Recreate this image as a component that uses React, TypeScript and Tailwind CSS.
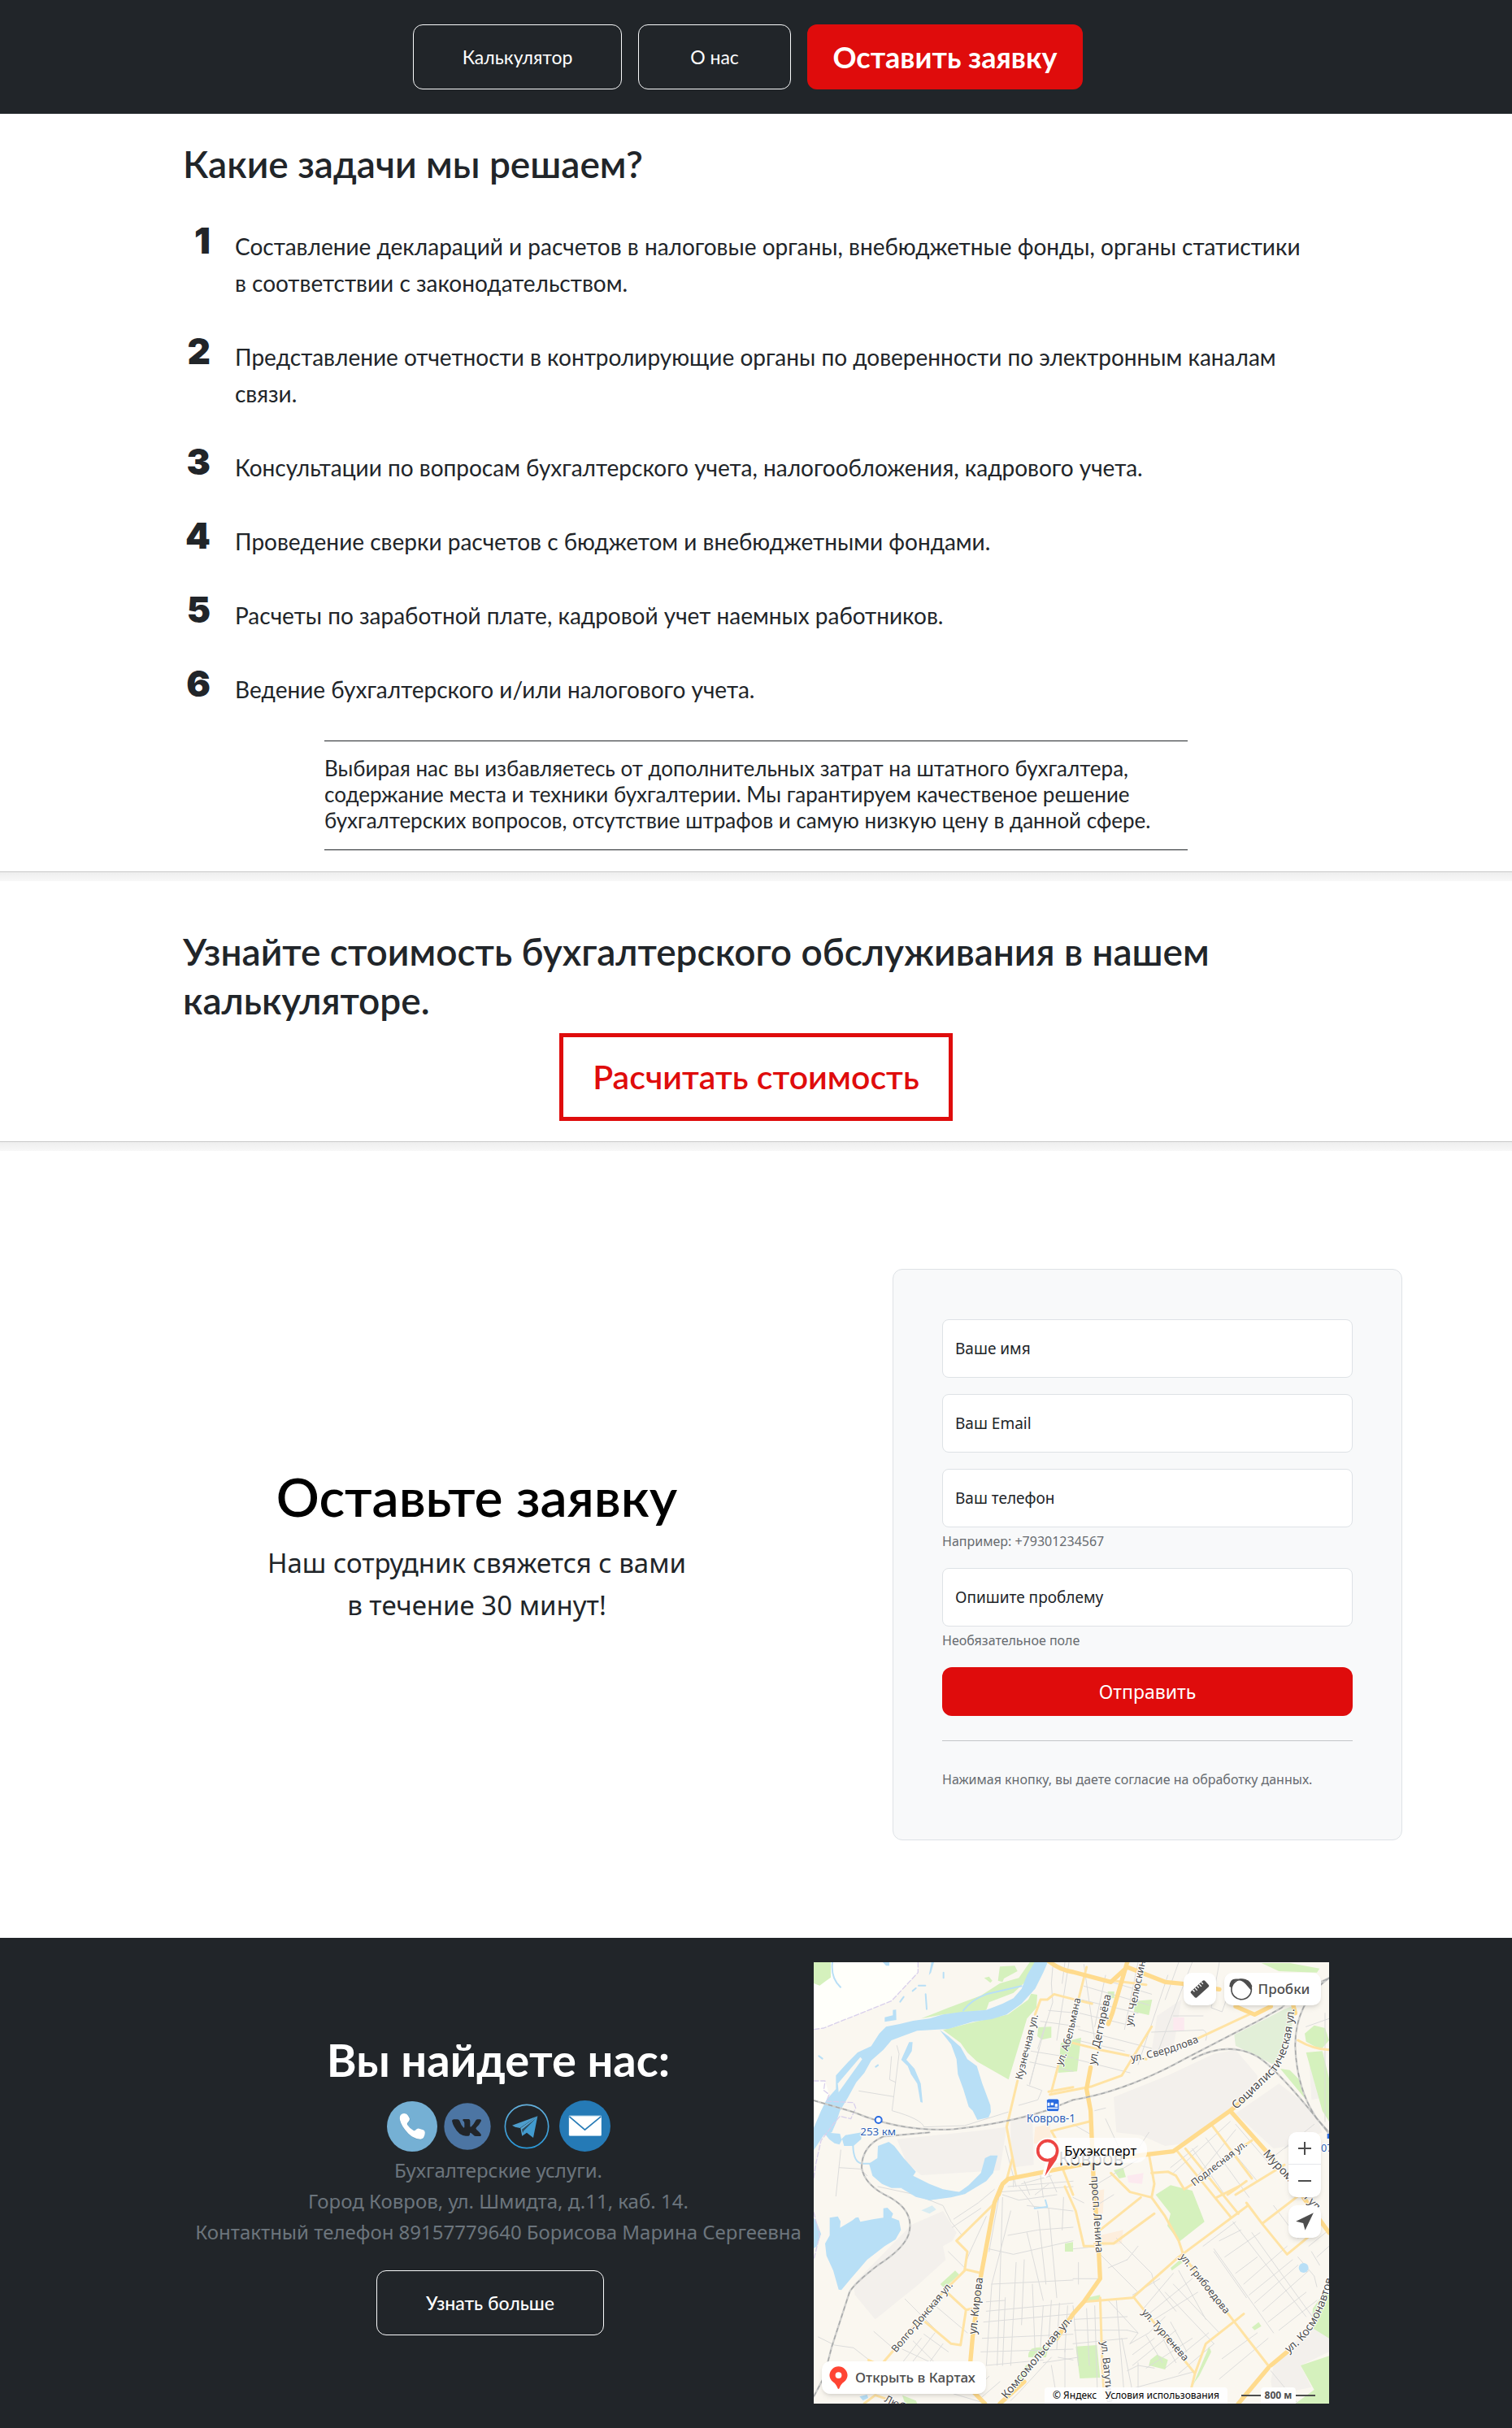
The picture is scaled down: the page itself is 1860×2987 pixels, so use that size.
import React from "react";

const TASKS = [
  "Составление деклараций и расчетов в налоговые органы, внебюджетные фонды, органы статистики в соответствии с законодательством.",
  "Представление отчетности в контролирующие органы по доверенности по электронным каналам связи.",
  "Консультации по вопросам бухгалтерского учета, налогообложения, кадрового учета.",
  "Проведение сверки расчетов с бюджетом и внебюджетными фондами.",
  "Расчеты по заработной плате, кадровой учет наемных работников.",
  "Ведение бухгалтерского и/или налогового учета.",
];

const OUTLINE_BUTTON =
  "flex h-20 items-center justify-center rounded-xl border border-gray-50 font-[Lato,sans-serif] text-[23px] text-white";

function Divider() {
  return <div className="h-3 border-t border-[#c8c8c8] bg-linear-to-b from-[#eeeeee] to-[#f8f8f8]" />;
}

function Field({ id, label, type = "text", hint }: { id: string; label: string; type?: string; hint?: string }) {
  return (
    <div className="mb-5">
      <div className="grid">
        <input
          id={id}
          type={type}
          className="col-start-1 row-start-1 h-[72px] w-full rounded-lg border border-[#dee2e6] bg-white px-4 text-[19px] text-[#212529]"
        />
        <label htmlFor={id} className="pointer-events-none col-start-1 row-start-1 self-center px-4 text-[19px] text-[#212529]">
          {label}
        </label>
      </div>
      {hint && <p className="pt-1 text-base leading-[26px] text-[#676b70]">{hint}</p>}
    </div>
  );
}

function PhoneIcon() {
  return (
    <svg viewBox="30 30 186 186" className="size-[62px]" aria-hidden="true">
      <circle cx="123" cy="123" r="93" fill="#75b0d4" />
      <path d="M80 88q4-12 16-12 10 0 14 8l5 9q3 8-5 15-6 4-2 11 9 14 22 20 5 2 9-3 5-6 12-4l13 4q8 3 6 13-1 20-16 23-25-1-45-21-25-25-31-50-1-7 2-13z" fill="#4f87a8" opacity="0.5" />
      <path d="M78 86q4-11 16-11 10 0 14 8l5 9q3 8-5 15-6 4-2 11 9 14 22 20 5 2 9-3 5-6 12-4l15 5q8 3 6 13-1 18-16 21-25-1-45-21-25-25-31-50-1-7 0-13z" fill="#fff" />
    </svg>
  );
}

function VkIcon() {
  return (
    <svg viewBox="240 36 174 174" className="size-[58px]" aria-hidden="true">
      <circle cx="327" cy="123" r="86" fill="#4c75a3" />
      <path
        d="M270 102q1-5 7-5h13q6 0 8 5 6 17 14 25 4 3 4-3v-13q0-6-5-9-4-3 1-6h20q5 1 5 7v19q1 5 5 1 9-9 15-21 2-5 7-5h9q7 1 4 7-5 11-17 23-4 4 1 8 12 10 16 17 3 7-6 7h-14q-5 0-9-5-7-8-10-8-2 0-2 5 0 7-5 7h-10q-26-1-43-34-6-11-8-22z"
        fill="#212529"
      />
    </svg>
  );
}

function TelegramIcon() {
  return (
    <svg viewBox="461 41 168 168" className="size-14" aria-hidden="true">
      <defs>
        <linearGradient id="tg" x1="0" y1="0" x2="0" y2="1">
          <stop offset="0" stopColor="#64b0dc" />
          <stop offset="1" stopColor="#2a98d8" />
        </linearGradient>
      </defs>
      <circle cx="545" cy="125" r="80" fill="none" stroke="url(#tg)" strokeWidth="5" />
      <path d="M491 121 585 87 520 131 502 127z" fill="#4d9dcc" />
      <path d="M585 87 569 167 545 148 528 160 528 137z" fill="#419bcf" />
      <path d="M585 87 522 131 528 161 533 140z" fill="#57a6d4" />
      <path d="M579 95 527 136 530 150 534 141z" fill="#212529" opacity="0.7" />
    </svg>
  );
}

function MailIcon() {
  return (
    <svg viewBox="666 30 188 188" className="size-[63px]" aria-hidden="true">
      <circle cx="760" cy="124" r="94" fill="#257ab6" />
      <rect x="701" y="85" width="120" height="76" rx="4" fill="#a8cbe2" />
      <rect x="702" y="88" width="118" height="70" rx="3" fill="#fff" />
      <path d="M703 89 760 138 819 89" fill="none" stroke="#257ab6" strokeWidth="5" />
    </svg>
  );
}

/* Map geometry: every list holds path data drawn in one style. */
const WATER = [
  "M825 0H872L850 50 820 110 770 165 715 205 660 222 590 232 500 258 385 265 330 285 290 300 260 335 215 375 190 420 160 455 130 510 100 560 85 605 70 640 40 650 0 710V630L30 560 50 520 85 480 85 430 130 380 165 345 215 322 245 275 270 250 320 240 370 228 430 220 480 205 550 195 640 188 700 165 740 145 770 110 790 60z",
  "M468 262 500 285 545 325 570 370 605 395 625 460 655 540 657 565 648 585 607 594 590 560 575 545 555 480 535 425 530 370 510 315z",
  "M355 307H368L365 340 345 372 375 405 398 460 405 530 397 528 385 460 362 425 350 395 326 372z",
  "M265 215 295 208 295 188 307 187 308 225 265 232z",
  "M240 690 280 675 300 690 335 735 380 785 370 800 430 830 480 850 540 860 575 835 590 820 620 790 635 735 655 725 682 725 665 790 640 820 590 850 560 868 510 880 430 890 370 870 350 855 330 845 290 845 255 830 220 800 207 755 238 735z",
  "M62 955 92 950 102 968 100 992 145 965 158 955 168 953 175 970 225 960 260 955 260 920 275 918 296 940 290 955 318 965 325 1000 305 1035 265 1060 200 1110 140 1180 105 1222 95 1220 75 1150 50 1095 45 1050 62 1020z",
  "M40 640 100 645 105 665 120 650 180 640 178 665 150 690 115 690 108 665 98 685 80 680 60 665z",
  "M0 950 15 975 30 1015 15 1060 0 1070z",
  "M325 845 400 840 470 858 540 860 575 840 565 865 500 878 430 890 380 878z",
  "M258 12H282V25H270z",
  "M437 12H447L436 50 428 60z",
  "M1793 1140a18 18 0 1 0 36 0 18 18 0 1 0-36 0z",
  "M172 1615 200 1608 204 1620 185 1630z",
];
const STREAMS = [
  "M72 12Q65 70 102 104",
  "M420 185 416 130",
  "M390 98 415 98",
  "M335 140 322 158",
  "M482 50V70",
  "M555 190Q585 150 640 130L770 100",
  "M148 690Q150 750 180 755L215 755",
  "M22 358 35 368",
  "M240 392 232 398",
  "M818 920 865 915 858 890",
  "M368 118 380 108",
];
const GREENS = [
  "M3 12H66V68L25 98 3 90z",
  "M400 220 500 180 620 135 690 90 760 70 800 12H826L800 70 740 125 650 160 640 188 480 205z",
  "M480 262 600 232 720 205 795 150 805 128 828 132 825 180 790 220 722 445 605 378 570 345 545 310z",
  "M690 28 745 25 755 45 705 72 700 85 683 80z",
  "M632 70 650 65 662 80 655 88z",
  "M832 252 880 250 880 290 845 298 828 285z",
  "M915 310 990 290 975 415 905 420z",
  "M1088 120H1112V145H1090z",
  "M1190 155 1252 150 1240 207 1185 195z",
  "M1655 15 1760 15 1870 35 1860 50 1720 45z",
  "M1815 275 1850 245 1890 255 1905 300 1875 335 1820 305z",
  "M1820 345 1880 340 1905 440V600L1880 560z",
  "M1725 405 1760 410 1800 450 1820 520z",
  "M1265 870 1320 835 1400 855 1445 970 1352 1043 1308 985 1320 940z",
  "M1110 780 1145 770 1155 805 1130 810z",
  "M470 1200 525 1150 540 1165 485 1215z",
  "M795 1460Q800 1438 820 1435L870 1430 860 1470 795 1470z",
  "M740 1565 790 1495 800 1520 745 1580z",
  "M930 1050 960 1045V1080H930z",
  "M970 1430 1048 1425 1060 1545 985 1548z",
  "M1245 1480 1270 1460 1310 1480 1300 1515 1240 1500z",
  "M1885 1235 1905 1230V1400L1840 1360 1845 1290z",
  "M1800 1500 1905 1465V1641H1780L1850 1590z",
  "M1462 1430 1470 1450 1425 1540 1410 1560 1395 1590z",
  "M1620 1360 1645 1340 1655 1355 1630 1370z",
  "M1320 1140 1355 1110 1365 1120 1325 1150z",
  "M1010 1250 1060 1240 1058 1260 1005 1265z",
  "M330 1610 380 1630 385 1641H340z",
];
const BLOCKS = [
  "M310 665 600 635 715 620 690 780 400 798 345 750z",
  "M365 980 480 930 530 1010 515 1040 480 1060 490 1110 385 1205 230 1330 155 1240 150 1200z",
  "M1110 510 1310 430 1480 350 1560 335 1640 430 1640 480 1540 570 1380 680 1300 690 1210 650 1120 640z",
  "M1560 570 1720 460 1850 560 1880 640 1760 690 1700 700z",
  "M1270 210 1360 150 1330 330 1250 340z",
  "M730 590 810 580 815 760 730 770z",
  "M1830 350 1890 345 1890 510 1840 520z",
  "M1690 1560 1700 1500 1850 1340 1905 1390V1450L1800 1500 1840 1580 1700 1610z",
];
const MINOR = [
  "M310 320 318 350 292 560Q400 590 410 620L560 615 720 565",
  "M170 487 298 508M290 360 283 445 305 455",
  "M885 30 880 90 885 160 860 240 800 460M930 12 920 90M870 190 980 200M840 230 985 250M805 340 960 365M800 380 960 415M790 465 845 485 830 520 760 540",
  "M835 330 800 465M860 235 830 330 M945 12 900 300",
  "M1020 60 1250 130M1000 100 1240 170M990 150 1200 200M985 200 1190 250M980 260 1250 330M975 300 1150 340M970 370 1170 420",
  "M1000 20 1040 300M1080 60 1040 250M1200 12 1150 260M1310 60 1200 390M1400 12 1270 350",
  "M1250 270 1440 262Q1460 270 1450 300M1330 210 1440 210M1500 12 1470 180 1510 195 1550 80M1350 12 1300 150",
  "M1040 560 1080 550M1080 590 1150 740M1100 730 1200 700 1240 640M1050 830 1200 740M960 610 1030 650",
  "M1320 770 1420 690M1330 790 1540 600M1380 850 1560 630M1400 700 1520 870M1450 660 1610 880M1560 610 1680 750M1490 640 1640 820",
  "M85 875 103 705M97 770 175 775 200 800M20 1395 80 1425 150 1435 220 1490",
  "M240 840 380 870 480 910 510 970 550 1020M520 960 610 900 670 850M515 990 620 920",
  "M340 1255 500 1415M440 1270 570 1380M225 1375 300 1440M500 1080 560 1140M410 1385 500 1450M640 950 580 1080 560 1130",
  "M330 1440 480 1510M370 1410 460 1500M400 1400 330 1490M450 1380 350 1510M480 1420 400 1530",
  "M730 930 660 1200 640 1500M690 860 650 1080M700 870 760 890 900 870M790 910 960 930M720 1020 830 1000 960 990M650 1070 740 1090 960 1040M660 1200 960 1185M640 1265 710 1260M640 1300 960 1270M630 1340 960 1310M625 1400 960 1385M620 1450 960 1440M640 1500 850 1480",
  "M700 880 690 1200 680 1500M750 1120 730 1500M780 1110 770 1350M790 1010 850 1260M830 930 860 1200M870 920 900 1250M925 880 920 1000M810 1200 820 1450M850 1280 840 1430M880 1260 870 1410M910 1270 900 1440M940 1280 930 1450M710 1250 700 1500",
  "M960 1070 1060 1060M980 1120 980 1200M960 1180 1060 1180M965 1330 1160 1320M965 1370 1160 1370M960 1420 1160 1400M960 1280 980 1500M1010 1290 1020 1500M1040 1280 1050 1600M1120 1260 1150 1620M1140 1400 1180 1600M1090 1260 1200 1380",
  "M1060 1090 1200 1230M1090 1140 1160 1110M1120 1030 1250 1160 1260 1200 1340 1300M1160 1110 1200 1060M1030 920 1110 870M1000 900 960 880",
  "M1180 1240 1280 1180M1220 1290 1330 1160M1240 1310 1400 1180M1260 1330 1420 1230M1300 1230 1480 1420M1330 1200 1500 1380M1350 1150 1450 1330M1400 1130 1500 1290",
  "M1170 1420 1240 1380 1300 1320M1180 1460 1260 1400M1180 1500 1340 1370M1230 1510 1400 1400M1300 1510 1460 1380M1350 1530 1480 1420M1280 1380 1340 1490M1320 1340 1380 1450M1230 1390 1290 1490",
  "M1160 1370 1200 1380 1170 1420M1200 1490 1200 1600M1180 1585 1400 1525M1160 1520 1200 1500 1260 1510",
  "M1480 1070 1700 1380M1550 970 1820 1320M1500 1040 1580 1000M1620 1010 1850 1330M1520 1100 1650 1010M1560 1160 1640 1100M1590 1200 1750 1060M1610 1240 1770 1110M1630 1270 1790 1130M1660 1300 1830 1150M1680 1340 1820 1230M1720 1370 1860 1260M1440 1060 1560 970M1480 1080 1600 1250",
  "M1500 1550 1680 1400M1510 1475 1640 1380M1790 1100 1850 1170 1860 1210M1830 1060 1905 1000M1840 1080 1870 1130M1700 910 1790 1030M1860 1100 1905 1060M1690 1520 1790 1641",
  "M710 690 750 840M740 800 740 841M770 830 880 800M840 800 850 880M720 840 960 820M780 820 800 870M690 860 960 840M860 770 900 860",
  "M600 1590 650 1540M620 1620 690 1560M730 1630 760 1600 880 1470M880 1500 900 1620M905 1470 960 1480M930 1440 930 1600M850 1490 980 1470M520 1605 640 1641",
  "M1700 730 1850 610M1740 700 1830 640M1820 250 1905 220M1890 200 1890 600",
  "M820 870 870 830M760 840 820 920 865 915",
];
const ROADS = [
  "M840 150 820 205M755 450 715 620 730 700 750 800M842 150 865 150 890 130 960 148 1030 165",
  "M905 395 880 490M875 500 1030 470 1140 430 1250 250M870 490 960 473",
  "M880 635 1020 600M880 635 900 670M960 310 1060 335 1230 370M1010 30 980 150M1110 80 1230 95",
  "M735 740 715 815M920 770 960 870M930 840 970 930 1000 1060 1060 1060",
  "M1240 720 1260 830 1250 880 1300 950 1350 1040 1370 1100M1100 790 1170 860 1250 880M1040 1050 1110 1050 1260 940M1060 1000 1210 880",
  "M1250 790 1310 785 1340 800 1370 850 1460 795M1345 710 1540 950M1375 700 1570 940M1470 610 1620 810M1560 870 1740 760M1490 880 1570 840",
  "M1620 670 1590 690M1600 900 1660 980 1750 1090 1860 1000M1660 975 1810 860M1530 870 1600 820",
  "M1790 300Q1850 335 1905 335M1410 298 1620 200",
  "M672 900 530 1040 570 1080 560 1150 480 1230 250 1500M560 1145 625 1160M500 1235 565 1295 590 1290M565 1295 545 1425 510 1420 415 1340M205 1480 250 1500",
  "M190 1640 230 1610 320 1640M1060 1250 1068 1500 1075 1620M1185 1250 1410 1530 1395 1590M1410 1530 1450 1420 1590 1310",
  "M1000 1265 1180 1250 1350 1100 1605 910M1370 1100 1680 1500",
];
const MAJOR = [
  "M870 8Q910 40 960 48L1100 85 1160 30 1300 85 1370 92M1370 92 1500 112M1160 12 1105 200 1090 240",
  "M1025 400 1010 480 1025 560 1035 800 1055 1080 1060 1180 1000 1265 960 1310 900 1400",
  "M685 870 700 830 720 812 960 765 1120 735 1330 710 1400 660 1540 560 1700 740M1540 560 1590 520",
  "M695 840 670 900 620 1170 590 1390 580 1500 595 1600 635 1641M780 1560 690 1641",
  "M1560 175 1630 205 1690 175M1770 160 1780 200M1810 880 1905 1010M1690 1500 1750 1450M1680 1510 1570 1641",
];
const RAILS = [
  "M3 522 150 565Q330 640 520 628Q700 610 860 560L960 520Q1150 490 1370 370L1640 230 1730 180 1780 130 1905 70",
  "M1400 370Q1530 300 1640 360Q1720 410 1905 645",
  "M1905 70Q1780 160 1780 320Q1785 480 1860 590L1905 640",
  "M430 640 260 655Q180 690 180 770Q190 830 265 870Q370 920 357 1000Q350 1060 240 1130Q150 1200 135 1230L70 1430 40 1545 3 1615",
];
const BOUNDARIES = [
  "M388 12V50L290 155 40 255 3 260",
  "M3 450H45L40 485 60 500 50 525 150 530 158 550 140 590 100 580 75 610 30 670 10 760 3 810M3 935 25 1020 3 1110",
];

const LABELS = [
  { text: "Кузнечная ул.", d: "M772 447 835 190", size: 37 },
  { text: "ул. Абельмана", d: "M918 395Q950 330 965 250L992 130", size: 37 },
  { text: "ул. Дегтярёва", d: "M1043 392 1108 100", size: 40 },
  { text: "ул. Челюскинцев", d: "M1178 248 1250 -100", size: 38 },
  { text: "ул. Свердлова", d: "M1175 378Q1300 360 1440 300", size: 38 },
  { text: "Социалистическая ул.", d: "M1562 556 1690 435Q1765 370 1778 170", size: 42 },
  { text: "Подлесная ул.", d: "M1408 840 1640 660", size: 36 },
  { text: "Муромская ул.", d: "M1660 720 1860 935", size: 42 },
  { text: "просп. Ленина", d: "M1027 802 1048 1140", size: 40 },
  { text: "ул. Грибоедова", d: "M1352 1100 1560 1360", size: 37 },
  { text: "ул. Тургенева", d: "M1212 1305 1400 1520", size: 37 },
  { text: "ул. Ватутина", d: "M1063 1412 1090 1690", size: 38 },
  { text: "ул. Кирова", d: "M602 1386 632 1140", size: 41 },
  { text: "Волго-Донская ул.", d: "M307 1454 530 1190", size: 37 },
  { text: "Комсомольская ул.", d: "M715 1625 985 1300", size: 41 },
  { text: "ул. Космонавтов", d: "M1755 1455Q1880 1370 1925 1150", size: 41 },
  { text: "Любинская ул.", d: "M262 1632 460 1730", size: 37 },
];

function CityMap() {
  return (
    <svg viewBox="3 12 1902 1629" className="block h-full w-full font-['Noto_Sans',sans-serif]" role="img" aria-label="Карта города Ковров">
      <rect x="3" y="12" width="1902" height="1629" fill="#faf7f0" />
      <path d="M3 12H388V50L290 155 40 255 3 260z" fill="#fffffa" />
      <path d="M3 450H45L60 500 30 590 3 620z" fill="#fffffa" />
      {BLOCKS.map((d) => <path key={d} d={d} fill="#f3f0ec" />)}
      {GREENS.map((d) => <path key={d} d={d} fill="#d5f1bd" />)}
      <path d="M1555 280 1740 185 1780 170 1760 290 1700 390 1560 320z" fill="#e2efd8" />
      <path d="M820 620 875 610 880 690 815 680zM1030 860 1075 850 1070 940 1030 930zM1060 1020 1145 1000 1140 1050 1060 1060z" fill="#fdeedd" />
      <path d="M1330 215H1370V265H1330zM1160 800 1220 790 1215 830 1165 825z" fill="#fce9ef" />
      <g fill="none" strokeLinejoin="round" strokeLinecap="round">
        {MINOR.map((d) => <path key={d} d={d} stroke="#dcdcdb" strokeWidth="3" />)}
      </g>
      {WATER.map((d) => <path key={d} d={d} fill="#b8dff6" />)}
      <path d="M175 362 182 370 95 492 92 460z" fill="#faf7f0" />
      <path d="M400 928 440 910 455 925 430 940z" fill="#d8ecf2" />
      <g fill="none" strokeLinejoin="round" strokeLinecap="round">
        {STREAMS.map((d) => <path key={d} d={d} stroke="#b8dff6" strokeWidth="6" />)}
        {BOUNDARIES.map((d) => <path key={d} d={d} stroke="#d9d0ec" strokeWidth="4" strokeDasharray="18 8" />)}
        {ROADS.map((d) => <path key={d} d={d} stroke="#ffe3a4" strokeWidth="9" />)}
        {MAJOR.map((d) => <path key={d} d={d} stroke="#ffdb8d" strokeWidth="16" />)}
        {RAILS.map((d) => <path key={d} d={d} stroke="#cfcfcd" strokeWidth="7" />)}
      </g>
      {RAILS.map((d) => <path key={d} d={d} fill="none" stroke="#a5a7a8" strokeWidth="4" strokeDasharray="16 12" />)}
      {LABELS.map(({ text, d, size }, i) => (
        <g key={text}>
          <path id={`street-${i}`} d={d} fill="none" />
          <text fontSize={size} fill="#4b4b4b" stroke="#fff" strokeWidth="6" strokeLinejoin="round" paintOrder="stroke">
            <textPath href={`#street-${i}`}>{text}</textPath>
          </text>
        </g>
      ))}
      <g fill="#2f5fb3" stroke="#fff" strokeWidth="6" strokeLinejoin="round" paintOrder="stroke">
        <text x="175" y="650" fontSize="40">253 км</text>
        <text x="788" y="603" fontSize="41">Ковров-1</text>
        <text x="1875" y="712" fontSize="38">07</text>
      </g>
      <circle cx="242" cy="594" r="12" fill="#fff" stroke="#2a6be0" strokeWidth="6" />
      <path d="M1898 645h10v18h-10z" fill="#2a6be0" />
      <rect x="862" y="516" width="47" height="47" rx="8" fill="#2a6be0" stroke="#fff" strokeWidth="3" />
      <path d="M866 548h38v5h-38zM866 530h8v12h-8zM878 530h10v10h-10zM893 535h10v10h-10z" fill="#fff" />
      <text x="907" y="763" fontSize="68" fill="#4b4b4b" stroke="#fff" strokeWidth="6" paintOrder="stroke">Ковров</text>
      <rect x="850" y="660" width="383" height="92" rx="40" fill="#fff" opacity="0.78" />
      <path d="M866 660a48 48 0 0 1 46 60q-6 20-22 40l-32 50-12-8 12-50q-38-12-38-46a47 47 0 0 1 46-46z" fill="#fff" />
      <path d="M871 746 905 722Q901 740 888 756L856 802z" fill="#ed4543" />
      <circle cx="866" cy="707" r="36" fill="#fff" stroke="#ed4543" strokeWidth="11" />
      <text x="928" y="725" fontSize="50" fill="#000">Бухэксперт</text>
    </svg>
  );
}

const MAP_CONTROL = "flex items-center justify-center bg-white text-[#4d4d4d] shadow-md";

function MapCard() {
  return (
    <div className="relative h-[543px] w-[634px] shrink-0 overflow-hidden font-['Noto_Sans',sans-serif]">
      <CityMap />
      <div className="absolute top-[13px] right-[10px] flex gap-[10px]">
        <button type="button" aria-label="Линейка" className={`${MAP_CONTROL} size-10 rounded-[10px]`}>
          <svg viewBox="0 0 24 24" className="size-6" aria-hidden="true">
            <g transform="rotate(-42 12 12)">
              <rect x="0.5" y="6.8" width="23" height="10.4" rx="2" fill="#4d4d4d" />
              <path d="M5 7v3M8.500 7v4M12 7v3M15.500 7v4M19 7v3" stroke="#fff" strokeWidth="1.300" />
            </g>
          </svg>
        </button>
        <button type="button" className={`${MAP_CONTROL} h-10 w-[119px] gap-[7px] rounded-[10px] pr-2 text-[17px] font-medium`}>
          <svg viewBox="572 66 90 88" className="size-[29px] shrink-0" aria-hidden="true">
            <circle cx="619" cy="110" r="38" fill="none" stroke="#4d4d4d" strokeWidth="5" />
            <path d="M573 99Q575 68 600 70 650 62 660 97L655 112 634 88Q612 70 600 76 585 80 584 104z" fill="#4d4d4d" />
          </svg>
          Пробки
        </button>
      </div>
      <div className="absolute top-[209px] right-[10px] flex flex-col gap-[10px]">
        <div className="overflow-hidden rounded-[10px] shadow-md">
          <button type="button" aria-label="Приблизить" className={`${MAP_CONTROL} size-10 border-b border-gray-200`}>
            <svg viewBox="0 0 18 18" className="size-[18px]" aria-hidden="true"><path d="M1 9h16M9 1v16" stroke="currentColor" strokeWidth="2" /></svg>
          </button>
          <button type="button" aria-label="Отдалить" className={`${MAP_CONTROL} size-10`}>
            <svg viewBox="0 0 18 18" className="size-[18px]" aria-hidden="true"><path d="M1 9h16" stroke="currentColor" strokeWidth="2" /></svg>
          </button>
        </div>
        <button type="button" aria-label="Моё местоположение" className={`${MAP_CONTROL} size-10 rounded-[10px]`}>
          <svg viewBox="818 100 65 66" className="size-[22px]" aria-hidden="true"><path d="M883 101 852 165 845 139 818 132z" fill="currentColor" /></svg>
        </button>
      </div>
      <a href="#maps" className="absolute bottom-[12px] left-[10px] flex h-10 w-[202px] items-center gap-[9px] rounded-[10px] bg-white pl-[9px] text-[17px] font-medium whitespace-nowrap text-[#4d4d4d] shadow-md">
        <svg viewBox="58 663 70 86" className="h-7 w-[23px] shrink-0" aria-hidden="true">
          <path d="M93 664a34 34 0 0 1 34 33q0 15-13 25-13 9-18 25-3 4-6 0-5-16-18-25-13-10-13-25a34 34 0 0 1 34-33z" fill="#ff4433" />
          <circle cx="93" cy="697" r="12" fill="#fff" />
        </svg>
        Открыть в Картах
      </a>
      <div className="absolute right-[125px] bottom-0 flex h-5 w-[225px] items-center justify-between rounded-t bg-white/90 px-[10px] text-xs whitespace-nowrap text-black">
        <a href="#yandex">© Яндекс</a>
        <a href="#terms">Условия использования</a>
      </div>
      <div className="absolute right-[17px] bottom-0 flex h-5 items-center text-xs font-bold whitespace-nowrap text-[#4d4d4d]">
        <span className="h-0.5 w-6 bg-[#4d4d4d]" />
        <span className="flex h-5 w-[43px] items-center justify-center rounded-t bg-white/90">800 м</span>
        <span className="h-0.5 w-6 bg-[#4d4d4d]" />
      </div>
    </div>
  );
}

export default function App() {
  return (
    <div className="min-h-screen bg-white font-['Noto_Sans',sans-serif] text-[#212529]">
      <header className="bg-[#212529] py-[30px]">
        <nav className="flex justify-center gap-5 pr-5">
          <button type="button" className={`${OUTLINE_BUTTON} w-[257px]`}>Калькулятор</button>
          <button type="button" className={`${OUTLINE_BUTTON} w-[188px]`}>О нас</button>
          <button type="button" className="h-20 w-[339px] rounded-xl bg-[#df0c0c] font-[Lato,sans-serif] text-4xl font-bold text-white">
            Оставить заявку
          </button>
        </nav>
      </header>

      <main>
        <section className="mx-auto max-w-[1410px] pt-8 pb-[26px] font-[Lato,sans-serif]">
          <h2 className="text-[46px] leading-[60px] font-semibold">Какие задачи мы решаем?</h2>
          <ol className="mt-[49px] flex flex-col gap-[46px]">
            {TASKS.map((task, i) => (
              <li key={task} className="flex gap-[30px] pr-6">
                <span className="w-[34px] shrink-0 text-right font-[Inter,sans-serif] text-[44px] leading-[30px] font-black">{i + 1}</span>
                <p className="text-[28px] leading-[45px]">{task}</p>
              </li>
            ))}
          </ol>
          <p className="mx-auto mt-10 max-w-[1062px] border-y border-[#212529] pt-[17px] pb-5 text-[26px] leading-8">
            Выбирая нас вы избавляетесь от дополнительных затрат на штатного бухгалтера, содержание места и техники бухгалтерии. Мы
            гарантируем качественое решение бухгалтерских вопросов, отсутствие штрафов и самую низкую цену в данной сфере.
          </p>
        </section>
        <Divider />

        <section className="mx-auto max-w-[1410px] pt-[57px] pb-[25px] font-[Lato,sans-serif]">
          <h2 className="text-[46px] leading-[60px] font-semibold">Узнайте стоимость бухгалтерского обслуживания в нашем калькуляторе.</h2>
          <button type="button" className="mx-auto mt-[10px] block h-[108px] border-[5px] border-[#df0c0c] px-9 text-[41px] font-semibold text-[#df0c0c]">
            Расчитать стоимость
          </button>
        </section>
        <Divider />

        <section className="mx-auto flex max-w-[1590px] items-center gap-[60px] pt-[145px] pb-[120px]">
          <div className="flex-1 pb-6 text-center">
            <h1 className="font-[Lato,sans-serif] text-[66px] leading-[80px] font-semibold text-black">Оставьте заявку</h1>
            <p className="mt-4 text-[33px] leading-[52px]">
              Наш сотрудник свяжется с вами
              <br />в течение 30 минут!
            </p>
          </div>
          <form className="w-[627px] rounded-xl border border-[#dee2e6] bg-[#f8f9fa] px-[60px] pt-[61px] pb-[59px]">
            <Field id="name" label="Ваше имя" />
            <Field id="email" label="Ваш Email" type="email" />
            <Field id="phone" label="Ваш телефон" type="tel" hint="Например: +79301234567" />
            <Field id="problem" label="Опишите проблему" hint="Необязательное поле" />
            <button type="submit" className="h-[60px] w-full rounded-xl bg-[#df0c0c] text-[23px] text-white">Отправить</button>
            <hr className="mt-[30px] border-[#c3c5c8]" />
            <p className="mt-8 text-base leading-[30px] text-[#676b70]">Нажимая кнопку, вы даете согласие на обработку данных.</p>
          </form>
        </section>
      </main>

      <footer className="bg-[#212529] py-[30px]">
        <div className="mx-auto flex max-w-[1410px]">
          <div className="flex flex-1 flex-col items-center pt-[88px] text-center">
            <h2 className="font-[Lato,sans-serif] text-[56px] leading-[64px] font-bold text-white">Вы найдете нас:</h2>
            <div className="mt-[18px] flex items-center">
              <a href="tel:89157779640" aria-label="Телефон"><PhoneIcon /></a>
              <a href="#vk" aria-label="ВКонтакте" className="ml-2"><VkIcon /></a>
              <a href="#telegram" aria-label="Telegram" className="ml-4"><TelegramIcon /></a>
              <a href="#mail" aria-label="Почта" className="ml-3"><MailIcon /></a>
            </div>
            <p className="mt-1 text-2xl leading-[38px] text-[#6c757d]">
              Бухгалтерские услуги.
              <br />
              Город Ковров, ул. Шмидта, д.11, каб. 14.
              <br />
              Контактный телефон 89157779640 Борисова Марина Сергеевна
            </p>
            <button type="button" className={`${OUTLINE_BUTTON} mt-7 mr-5 w-[280px] font-medium`}>Узнать больше</button>
          </div>
          <MapCard />
        </div>
      </footer>
    </div>
  );
}
